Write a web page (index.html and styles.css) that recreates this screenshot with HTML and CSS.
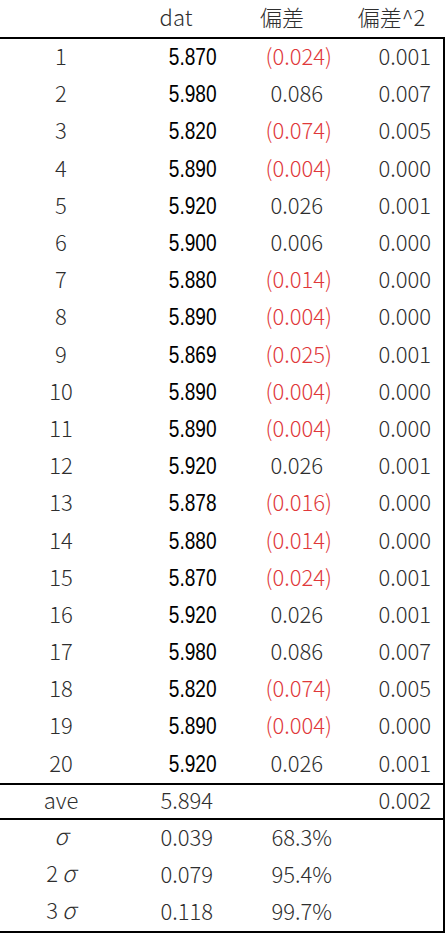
FILE: index.html
```html
<!DOCTYPE html>
<html lang="ja">
<head>
    <meta charset="UTF-8">
    <meta name="viewport" content="width=device-width, initial-scale=1.0">
    <link rel="stylesheet" href="styles.css">
    <title>偏差</title>
</head>
<body>
    <table class="sheet">
        <colgroup>
            <col class="c-no">
            <col class="c-dat">
            <col class="c-dev">
            <col class="c-sq">
        </colgroup>
        <thead>
            <tr>
                <th></th>
                <th>dat</th>
                <th class="dev-head">偏差</th>
                <th>偏差^2</th>
            </tr>
        </thead>
        <tbody class="data">
            <tr><td>1</td><td class="dat"><span>5.870</span></td><td class="dev neg">(0.024)</td><td class="sq">0.001</td></tr>
            <tr><td>2</td><td class="dat"><span>5.980</span></td><td class="dev">0.086</td><td class="sq">0.007</td></tr>
            <tr><td>3</td><td class="dat"><span>5.820</span></td><td class="dev neg">(0.074)</td><td class="sq">0.005</td></tr>
            <tr><td>4</td><td class="dat"><span>5.890</span></td><td class="dev neg">(0.004)</td><td class="sq">0.000</td></tr>
            <tr><td>5</td><td class="dat"><span>5.920</span></td><td class="dev">0.026</td><td class="sq">0.001</td></tr>
            <tr><td>6</td><td class="dat"><span>5.900</span></td><td class="dev">0.006</td><td class="sq">0.000</td></tr>
            <tr><td>7</td><td class="dat"><span>5.880</span></td><td class="dev neg">(0.014)</td><td class="sq">0.000</td></tr>
            <tr><td>8</td><td class="dat"><span>5.890</span></td><td class="dev neg">(0.004)</td><td class="sq">0.000</td></tr>
            <tr><td>9</td><td class="dat"><span>5.869</span></td><td class="dev neg">(0.025)</td><td class="sq">0.001</td></tr>
            <tr><td>10</td><td class="dat"><span>5.890</span></td><td class="dev neg">(0.004)</td><td class="sq">0.000</td></tr>
            <tr><td>11</td><td class="dat"><span>5.890</span></td><td class="dev neg">(0.004)</td><td class="sq">0.000</td></tr>
            <tr><td>12</td><td class="dat"><span>5.920</span></td><td class="dev">0.026</td><td class="sq">0.001</td></tr>
            <tr><td>13</td><td class="dat"><span>5.878</span></td><td class="dev neg">(0.016)</td><td class="sq">0.000</td></tr>
            <tr><td>14</td><td class="dat"><span>5.880</span></td><td class="dev neg">(0.014)</td><td class="sq">0.000</td></tr>
            <tr><td>15</td><td class="dat"><span>5.870</span></td><td class="dev neg">(0.024)</td><td class="sq">0.001</td></tr>
            <tr><td>16</td><td class="dat"><span>5.920</span></td><td class="dev">0.026</td><td class="sq">0.001</td></tr>
            <tr><td>17</td><td class="dat"><span>5.980</span></td><td class="dev">0.086</td><td class="sq">0.007</td></tr>
            <tr><td>18</td><td class="dat"><span>5.820</span></td><td class="dev neg">(0.074)</td><td class="sq">0.005</td></tr>
            <tr><td>19</td><td class="dat"><span>5.890</span></td><td class="dev neg">(0.004)</td><td class="sq">0.000</td></tr>
            <tr><td>20</td><td class="dat"><span>5.920</span></td><td class="dev">0.026</td><td class="sq">0.001</td></tr>
        </tbody>
        <tbody class="ave">
            <tr><td>ave</td><td class="num">5.894</td><td class="dev"></td><td class="sq">0.002</td></tr>
        </tbody>
        <tbody class="sigma">
            <tr><td><i>σ</i></td><td class="num">0.039</td><td class="pct">68.3%</td><td class="sq"></td></tr>
            <tr><td>2<i>σ</i></td><td class="num">0.079</td><td class="pct">95.4%</td><td class="sq"></td></tr>
            <tr><td>3<i>σ</i></td><td class="num">0.118</td><td class="pct">99.7%</td><td class="sq"></td></tr>
        </tbody>
    </table>
</body>
</html>
```

FILE: styles.css
```css
*{
    margin: 0;
    padding: 0;
    box-sizing: border-box;
}
body{
    background-color: #fff;
    font-family: "Noto Sans CJK JP", "Noto Sans", sans-serif;
    font-weight: 300;
    color: #2e2e2e;
}

.sheet{
    width: 445px;
    border-collapse: separate;
    border-spacing: 0;
    table-layout: fixed;
    font-size: 22px;
}
.c-no{ width: 122px; }
.c-dat{ width: 108px; }
.c-dev{ width: 108px; }
.c-sq{ width: 107px; }

.sheet th,
.sheet td{
    padding: 0 0 5px 0;
    vertical-align: middle;
    text-align: center;
    font-weight: 300;
    line-height: 1;
}
thead tr{
    height: 39px;
}
thead th{
    border-bottom: 2px solid #000;
}
.dev-head{
    padding-right: 4px !important;
}

tbody tr{
    height: 37.2px;
}
tbody td:last-child{
    border-right: 2px solid #000;
}
tbody tr:last-child td{
    border-bottom: 2px solid #000;
}
.data tr:last-child{
    height: 39.2px;
}
.ave tr{
    height: 35px;
}
.sigma tr{
    height: 37px;
}
.sigma tr:last-child{
    height: 39px;
}

.dat{
    text-align: right !important;
    padding: 0 13px 0 0 !important;
    font-family: "Liberation Sans", Arial, sans-serif;
    font-weight: normal !important;
    color: #000;
    font-size: 23px;
}
.dat span{
    display: inline-block;
    transform: scaleX(0.83);
    transform-origin: right center;
}
.dev{
    text-align: right !important;
    padding-right: 15px !important;
}
.dev.neg{
    padding-right: 6px !important;
    color: #e0383a;
}
.pct{
    text-align: right !important;
    padding-right: 6px !important;
}
.sq{
    text-align: right !important;
    padding-right: 12px !important;
}
.num{
    text-align: right !important;
    padding-right: 17px !important;
}
.sigma i{
    font-style: italic;
    font-size: 23px;
    margin-left: 4px;
}
.sigma tr:first-child i{
    margin-left: 0;
}
```
